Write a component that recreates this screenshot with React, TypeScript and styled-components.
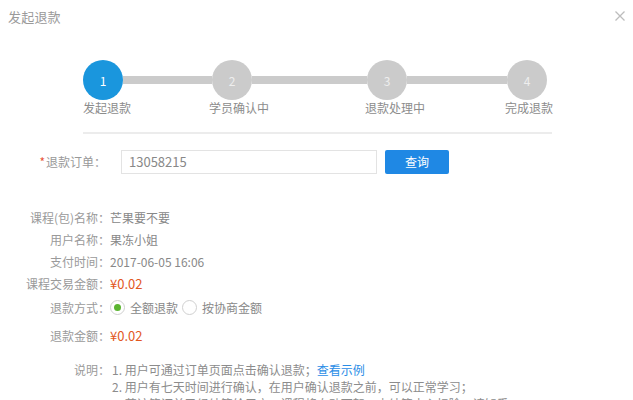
import React, { FC } from 'react'
import styled, { createGlobalStyle } from 'styled-components'

const GlobalStyle = createGlobalStyle`
  html, body {
    margin: 0;
    padding: 0;
    background: #fff;
  }
  body {
    font-family: 'Noto Sans CJK SC', 'Noto Sans', sans-serif;
    font-size: 12px;
    color: #666;
  }
`

const Dialog = styled.div`
  width: 633px;
  height: 400px;
  overflow: hidden;
  background: #fff;
`

const Header = styled.div`
  display: flex;
  align-items: center;
  justify-content: space-between;
  height: 32px;
  padding: 0 7px 0 8px;
`

const Title = styled.div`
  font-size: 13px;
  color: #9a9a9a;
  letter-spacing: 0.2px;
`

const Close = styled.button`
  width: 12px;
  height: 12px;
  padding: 0;
  border: 0;
  background: none;
  display: flex;
  cursor: pointer;
`

const Steps = styled.div`
  margin: 28px 0 0 83px;
  width: 469px;
`

const Track = styled.div`
  display: flex;
  align-items: flex-start;
`

const Step = styled.div`
  width: 40px;
  display: flex;
  flex-direction: column;
  align-items: center;
  flex-shrink: 0;
`

const Circle = styled.div<{ $active?: boolean }>`
  width: 40px;
  height: 40px;
  border-radius: 50%;
  background: ${({ $active }) => ($active ? '#1a96dd' : '#cbcbcb')};
  color: ${({ $active }) => ($active ? '#fff' : '#eee')};
  display: flex;
  align-items: center;
  justify-content: center;
  font-size: 12px;
`

const StepLabel = styled.div<{ $shift: number }>`
  margin-left: ${({ $shift }) => $shift * 2}px;
  white-space: nowrap;
  line-height: 16px;
  color: #8c8c8c;
  font-size: 12px;
`

const Bar = styled.div<{ $w: number }>`
  width: ${({ $w }) => $w}px;
  height: 8px;
  margin-top: 16px;
  background: #cbcbcb;
  flex-shrink: 0;
`

const Divider = styled.div`
  margin-top: 16px;
  height: 2px;
  background: #ececec;
`

const FormRow = styled.div`
  display: flex;
  align-items: center;
  margin-top: 15px;
  height: 25px;
`

const FormLabel = styled.div`
  width: 106px;
  text-align: right;
  color: #999;
  flex-shrink: 0;
`

const Star = styled.span`
  color: #e8563a;
  margin-right: 1px;
`

const Input = styled.input`
  box-sizing: border-box;
  margin-left: 15px;
  width: 256px;
  height: 24px;
  border: 1px solid #e3e3e3;
  padding: 0 7px;
  font-family: inherit;
  font-size: 13px;
  color: #888;
  outline: none;
`

const Button = styled.button`
  margin-left: 8px;
  width: 64px;
  height: 24px;
  border: 0;
  border-radius: 2px;
  background: #1f88e4;
  color: #fff;
  font-family: inherit;
  font-size: 12px;
  cursor: pointer;
`

const Info = styled.div`
  margin-top: 32px;
`

const Row = styled.div<{ $h?: number; $mt?: number }>`
  display: flex;
  align-items: center;
  height: ${({ $h }) => $h || 22}px;
  margin-top: ${({ $mt }) => $mt || 0}px;
`

const Label = styled.div`
  width: 110px;
  text-align: right;
  color: #9a9a9a;
  flex-shrink: 0;
`

const Value = styled.div<{ $money?: boolean }>`
  color: ${({ $money }) => ($money ? '#e2571e' : '#888')};
  font-size: ${({ $money }) => ($money ? '13px' : '12px')};
`

const Radios = styled.div`
  display: flex;
  align-items: center;
`

const RadioItem = styled.label`
  display: flex;
  align-items: center;
  margin-right: 4px;
  color: #888;
  cursor: pointer;
`

const RadioDot = styled.span<{ $checked?: boolean }>`
  box-sizing: border-box;
  width: 15px;
  height: 15px;
  border-radius: 50%;
  border: 1px solid #d0d0d0;
  margin-right: 5px;
  display: flex;
  align-items: center;
  justify-content: center;

  &:after {
    content: '';
    width: 7px;
    height: 7px;
    border-radius: 50%;
    background: #5cb531;
    display: ${({ $checked }) => ($checked ? 'block' : 'none')};
  }
`

const Notes = styled.div`
  display: flex;
  margin-top: 15px;
  line-height: 17px;
`

const NoteList = styled.div`
  margin-left: 2px;
  color: #8c8c8c;
  white-space: nowrap;
`

const Link = styled.a`
  color: #2a8de6;
  text-decoration: none;
`

const steps = [
  { n: 1, label: '发起退款', shift: 4 },
  { n: 2, label: '学员确认中', shift: 7 },
  { n: 3, label: '退款处理中', shift: 8 },
  { n: 4, label: '完成退款', shift: 2 }
]
const bars = [89, 115, 100]

const App: FC = () => {
  return (
    <Dialog>
      <GlobalStyle />
      <Header>
        <Title>发起退款</Title>
        <Close aria-label="关闭">
          <svg width="12" height="12" viewBox="0 0 12 12">
            <path d="M1.5 1.5 L10.5 10.5 M10.5 1.5 L1.5 10.5" stroke="#bdbdbd" strokeWidth="1.3" />
          </svg>
        </Close>
      </Header>

      <Steps>
        <Track>
          {steps.map((s, i) => (
            <React.Fragment key={s.n}>
              <Step>
                <Circle $active={i === 0}>{s.n}</Circle>
                <StepLabel $shift={s.shift}>{s.label}</StepLabel>
              </Step>
              {i < bars.length && <Bar $w={bars[i]} />}
            </React.Fragment>
          ))}
        </Track>
        <Divider />
      </Steps>

      <FormRow>
        <FormLabel>
          <Star>*</Star>退款订单：
        </FormLabel>
        <Input defaultValue="13058215" />
        <Button>查询</Button>
      </FormRow>

      <Info>
        <Row>
          <Label>课程(包)名称：</Label>
          <Value>芒果要不要</Value>
        </Row>
        <Row>
          <Label>用户名称：</Label>
          <Value>果冻小姐</Value>
        </Row>
        <Row>
          <Label>支付时间：</Label>
          <Value>2017-06-05 16:06</Value>
        </Row>
        <Row>
          <Label>课程交易金额：</Label>
          <Value $money>¥0.02</Value>
        </Row>
        <Row $h={26}>
          <Label>退款方式：</Label>
          <Radios>
            <RadioItem>
              <RadioDot $checked />
              全额退款
            </RadioItem>
            <RadioItem>
              <RadioDot />
              按协商金额
            </RadioItem>
          </Radios>
        </Row>
        <Row $mt={4}>
          <Label>退款金额：</Label>
          <Value $money>¥0.02</Value>
        </Row>
      </Info>

      <Notes>
        <Label>说明：</Label>
        <NoteList>
          <div>
            1. 用户可通过订单页面点击确认退款；<Link href="#">查看示例</Link>
          </div>
          <div>2. 用户有七天时间进行确认，在用户确认退款之前，可以正常学习；</div>
          <div>3. 若该笔订单已经结算给用户，课程将自动下架，由结算中心扣除，请知悉；</div>
        </NoteList>
      </Notes>
    </Dialog>
  )
}

export default App
